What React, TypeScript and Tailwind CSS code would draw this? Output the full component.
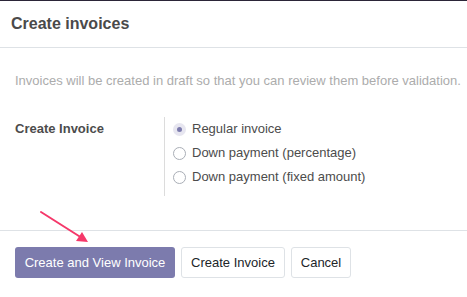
import React from "react";

function Radio({ checked, label }: { checked?: boolean; label: string }) {
  return (
    <div className="flex h-[24px] items-center">
      {checked ? (
        <span className="flex h-[13px] w-[13px] items-center justify-center rounded-full bg-[#e7e6f0]">
          <span className="h-[5px] w-[5px] rounded-full bg-[#7c7bad]" />
        </span>
      ) : (
        <span className="h-[13px] w-[13px] rounded-full border border-[#a9aeb6] bg-white" />
      )}
      <span className="ml-[6px] text-[13px] text-[#4c4c4c]">{label}</span>
    </div>
  );
}

export default function App() {
  return (
    <div
      className="relative flex h-[297px] w-[467px] flex-col overflow-hidden border-t border-[#2b2538] bg-white"
      style={{ fontFamily: "'Liberation Sans', Arial, sans-serif" }}
    >
      <div className="flex h-[47px] shrink-0 items-center border-b border-[#dee2e6] px-[11px]">
        <h1 className="text-[16px] font-bold leading-none text-[#4a4a4a]">Create invoices</h1>
      </div>
      <div className="flex h-[182px] shrink-0 flex-col px-[15px] pt-[23px]">
        <p className="h-[20px] whitespace-nowrap text-[13px] leading-[20px] text-[#acacac]">
          Invoices will be created in draft so that you can review them before validation.
        </p>
        <div className="mt-[26px] flex">
          <div className="w-[149px] pt-[3px] text-[13px] font-bold leading-[18px] text-[#4c4c4c]">
            Create Invoice
          </div>
          <div className="flex h-[79px] flex-col border-l border-[#dcdcdc] pl-[8px] pt-[0px]">
            <Radio checked label="Regular invoice" />
            <Radio label="Down payment (percentage)" />
            <Radio label="Down payment (fixed amount)" />
          </div>
        </div>
      </div>
      <div className="flex gap-[6px] border-t border-[#dee2e6] px-[15px] pt-[16px]">
        <button className="h-[31px] w-[160px] rounded-[3px] bg-[#7c7bad] text-[13px] text-white">
          Create and View Invoice
        </button>
        <button className="h-[31px] w-[104px] rounded-[3px] border border-[#dee2e6] bg-white text-[13px] text-[#212529]">
          Create Invoice
        </button>
        <button className="h-[31px] w-[60px] rounded-[3px] border border-[#dee2e6] bg-white text-[13px] text-[#212529]">
          Cancel
        </button>
      </div>
      <svg className="absolute left-0 top-0" width="467" height="297" viewBox="0 0 467 297">
        <line x1="41" y1="211" x2="82" y2="237" stroke="#f5386a" strokeWidth="2" strokeLinecap="round" />
        <polygon points="88,241 76,240 82,231" fill="#f5386a" />
      </svg>
    </div>
  );
}
